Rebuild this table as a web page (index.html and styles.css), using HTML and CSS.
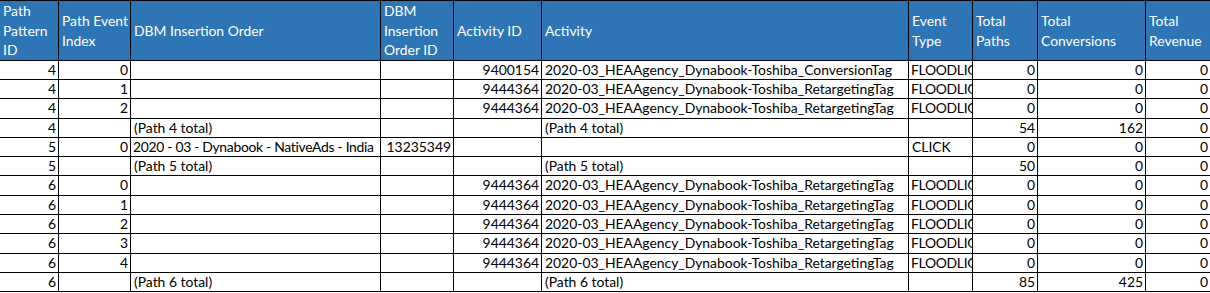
FILE: index.html
```html
<!DOCTYPE html>
<html lang="en">
<head>
<meta charset="utf-8">
<title>Path report</title>
<link rel="stylesheet" href="styles.css">
</head>
<body>
<div class="sheet">
  <div class="hd">Path<br>Pattern<br>ID</div>
  <div class="hd">Path Event<br>Index</div>
  <div class="hd">DBM Insertion Order</div>
  <div class="hd">DBM<br>Insertion<br>Order ID</div>
  <div class="hd">Activity ID</div>
  <div class="hd">Activity</div>
  <div class="hd">Event<br>Type</div>
  <div class="hd">Total<br>Paths</div>
  <div class="hd">Total<br>Conversions</div>
  <div class="hd">Total<br>Revenue</div>

  <div class="c n">4</div><div class="c n">0</div><div class="c"></div><div class="c"></div><div class="c n">9400154</div><div class="c">2020-03_HEAAgency_Dynabook-Toshiba_ConversionTag</div><div class="c fit">FLOODLIGHT</div><div class="c n">0</div><div class="c n">0</div><div class="c n">0</div>
  <div class="c n">4</div><div class="c n">1</div><div class="c"></div><div class="c"></div><div class="c n">9444364</div><div class="c">2020-03_HEAAgency_Dynabook-Toshiba_RetargetingTag</div><div class="c fit">FLOODLIGHT</div><div class="c n">0</div><div class="c n">0</div><div class="c n">0</div>
  <div class="c n">4</div><div class="c n">2</div><div class="c"></div><div class="c"></div><div class="c n">9444364</div><div class="c">2020-03_HEAAgency_Dynabook-Toshiba_RetargetingTag</div><div class="c fit">FLOODLIGHT</div><div class="c n">0</div><div class="c n">0</div><div class="c n">0</div>
  <div class="c n">4</div><div class="c n"></div><div class="c">(Path 4 total)</div><div class="c"></div><div class="c n"></div><div class="c">(Path 4 total)</div><div class="c"></div><div class="c n">54</div><div class="c n">162</div><div class="c n">0</div>
  <div class="c n">5</div><div class="c n">0</div><div class="c fit">2020 - 03 - Dynabook - NativeAds - India</div><div class="c n">13235349</div><div class="c n"></div><div class="c"></div><div class="c">CLICK</div><div class="c n">0</div><div class="c n">0</div><div class="c n">0</div>
  <div class="c n">5</div><div class="c n"></div><div class="c">(Path 5 total)</div><div class="c"></div><div class="c n"></div><div class="c">(Path 5 total)</div><div class="c"></div><div class="c n">50</div><div class="c n">0</div><div class="c n">0</div>
  <div class="c n">6</div><div class="c n">0</div><div class="c"></div><div class="c"></div><div class="c n">9444364</div><div class="c">2020-03_HEAAgency_Dynabook-Toshiba_RetargetingTag</div><div class="c fit">FLOODLIGHT</div><div class="c n">0</div><div class="c n">0</div><div class="c n">0</div>
  <div class="c n">6</div><div class="c n">1</div><div class="c"></div><div class="c"></div><div class="c n">9444364</div><div class="c">2020-03_HEAAgency_Dynabook-Toshiba_RetargetingTag</div><div class="c fit">FLOODLIGHT</div><div class="c n">0</div><div class="c n">0</div><div class="c n">0</div>
  <div class="c n">6</div><div class="c n">2</div><div class="c"></div><div class="c"></div><div class="c n">9444364</div><div class="c">2020-03_HEAAgency_Dynabook-Toshiba_RetargetingTag</div><div class="c fit">FLOODLIGHT</div><div class="c n">0</div><div class="c n">0</div><div class="c n">0</div>
  <div class="c n">6</div><div class="c n">3</div><div class="c"></div><div class="c"></div><div class="c n">9444364</div><div class="c">2020-03_HEAAgency_Dynabook-Toshiba_RetargetingTag</div><div class="c fit">FLOODLIGHT</div><div class="c n">0</div><div class="c n">0</div><div class="c n">0</div>
  <div class="c n">6</div><div class="c n">4</div><div class="c"></div><div class="c"></div><div class="c n">9444364</div><div class="c">2020-03_HEAAgency_Dynabook-Toshiba_RetargetingTag</div><div class="c fit">FLOODLIGHT</div><div class="c n">0</div><div class="c n">0</div><div class="c n">0</div>
  <div class="c n">6</div><div class="c n"></div><div class="c">(Path 6 total)</div><div class="c"></div><div class="c n"></div><div class="c">(Path 6 total)</div><div class="c"></div><div class="c n">85</div><div class="c n">425</div><div class="c n">0</div>
</div>
</body>
</html>
```
FILE: styles.css
```css
html, body {
  margin: 0;
  padding: 0;
  background: #ffffff;
}

body {
  width: 1210px;
  overflow: hidden;
  font-family: Lato, "Liberation Sans", sans-serif;
  font-size: 13.9px;
  color: #000000;
}

.sheet {
  display: grid;
  width: 1211px;
  grid-template-columns: 59px 72px 250px 73px 88px 367px 64px 65px 108px 65px;
  grid-template-rows: 61px 19px 19px 20px 19px 19px 19px 20px 19px 19px 20px 19px 19px;
}

.hd,
.c {
  box-sizing: border-box;
  border-right: 1px solid #000000;
  border-bottom: 1px solid #000000;
  overflow: hidden;
  white-space: nowrap;
}

.hd {
  display: flex;
  align-items: center;
  border-top: 1px solid #000000;
  background: #2e75b6;
  color: #ffffff;
  padding: 0 2px 0 3px;
  line-height: 19.5px;
}

.c {
  padding: 0 2px 0 3px;
  line-height: 18px;
}

.fit {
  padding-left: 2px;
  letter-spacing: -0.3px;
}

.n {
  text-align: right;
}
```
